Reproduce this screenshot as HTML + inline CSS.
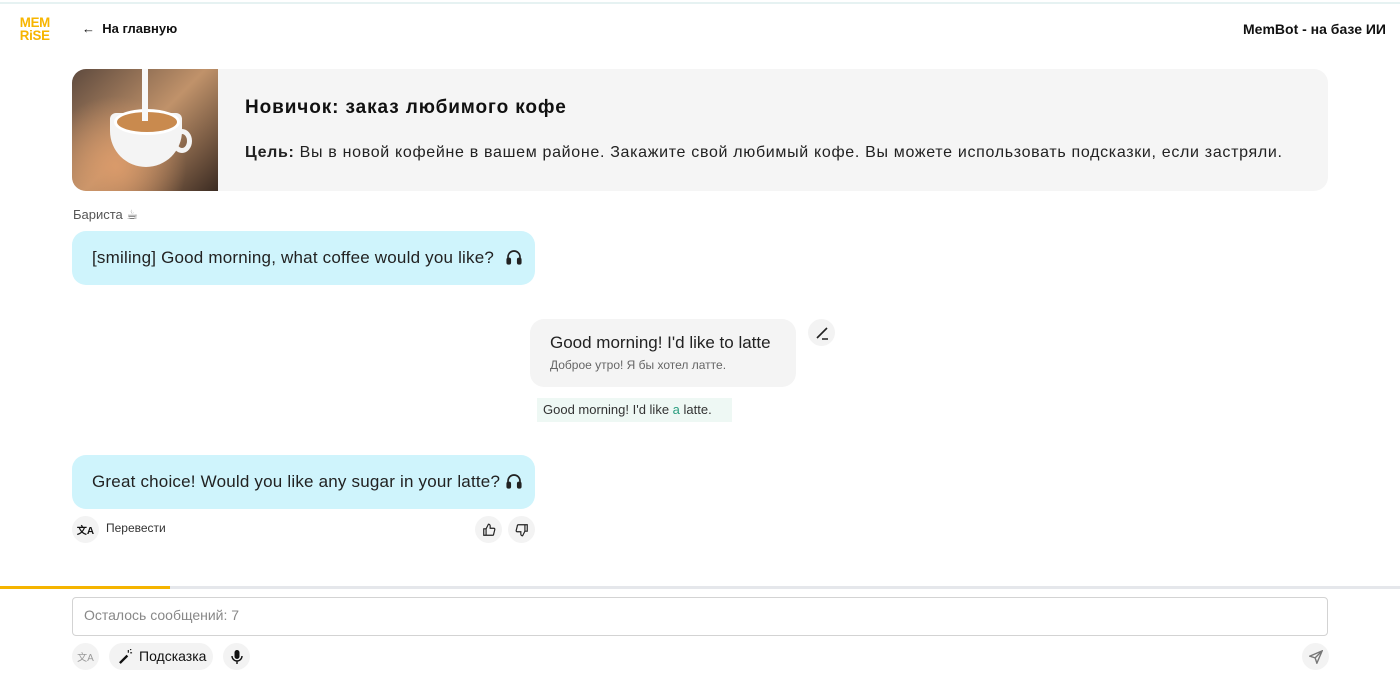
<!DOCTYPE html>
<html><head><meta charset="utf-8"><style>
*{box-sizing:border-box;margin:0;padding:0}
body{width:1400px;height:680px;background:#fff;font-family:"Liberation Sans","DejaVu Sans",sans-serif;color:#111;position:relative;overflow:hidden}
.abs{position:absolute}
.topline{left:0;top:2px;width:1400px;height:2px;background:#e6f2f2}
.logo{left:19px;top:16px;font-weight:900;color:#f7b500;font-size:14px;line-height:13px;letter-spacing:-0.3px;transform:scaleX(0.95)}
.back{left:82px;top:21px;font-size:13px;font-weight:bold}
.membot{right:14px;top:21px;font-size:14px;font-weight:bold}
.card{left:72px;top:69px;width:1256px;height:122px;background:#f5f5f5;border-radius:14px;overflow:hidden}
.img{left:0;top:0;width:146px;height:122px;background:radial-gradient(circle at 30% 80%,#d99a6a,transparent 50%),linear-gradient(135deg,#5e4a3e,#c0926a 50%,#3b2b22);}
.title{left:245px;top:97px;font-size:19px;font-weight:bold;letter-spacing:0.9px}
.goal{left:245px;top:144px;font-size:16px;color:#222;letter-spacing:0.68px}
.label{left:73px;top:207px;font-size:13px;color:#555}
.bot{background:#cff4fc;border-radius:14px;font-size:17px;color:#222;padding:0 20px;line-height:54px;height:54px;letter-spacing:0.2px}
.user{left:530px;top:319px;width:266px;height:68px;background:#f4f4f4;border-radius:14px}
.circ{border-radius:50%;background:#f3f3f3;display:flex;align-items:center;justify-content:center}
svg{display:block}
</style></head><body>
<div class="abs topline"></div>
<div class="abs logo">MEM<br>RiSE</div>
<div class="abs back">←&nbsp; На главную</div>
<div class="abs membot">MemBot - на базе ИИ</div>
<div class="abs card"><div class="abs img">
<div class="abs" style="left:38px;top:44px;width:72px;height:54px;background:#f4f4f4;border-radius:6px 6px 36px 36px"></div>
<div class="abs" style="left:42px;top:40px;width:66px;height:26px;background:#c98a4e;border-radius:50%;border:3px solid #fff"></div>
<div class="abs" style="left:100px;top:60px;width:20px;height:24px;border:5px solid #f4f4f4;border-radius:50%"></div>
<div class="abs" style="left:70px;top:0;width:6px;height:52px;background:#f8f8f8"></div>
</div></div>
<div class="abs title">Новичок: заказ любимого кофе</div>
<div class="abs goal"><b>Цель:</b> Вы в новой кофейне в вашем районе. Закажите свой любимый кофе. Вы можете использовать подсказки, если застряли.</div>
<div class="abs label">Бариста ☕</div>
<div class="abs bot" style="left:72px;top:231px;width:463px">[smiling] Good morning, what coffee would you like?</div>
<svg class="abs" style="left:505px;top:248px" width="18" height="18" viewBox="0 0 24 24" fill="none" stroke="#222" stroke-width="2.2"><path d="M4 17v-5a8 8 0 0 1 16 0v5"/><rect x="3" y="14" width="4" height="7" rx="1.5" fill="#222"/><rect x="17" y="14" width="4" height="7" rx="1.5" fill="#222"/></svg>
<div class="abs user"><div class="abs" style="left:20px;top:14px;font-size:17px;color:#222">Good morning! I'd like to latte</div><div class="abs" style="left:20px;top:39px;font-size:12px;color:#666">Доброе утро! Я бы хотел латте.</div></div>
<div class="abs circ" style="left:808px;top:319px;width:27px;height:27px"><svg width="14" height="14" viewBox="0 0 14 14" stroke="#222" stroke-width="1.6"><path d="M2 12L12 2M7 13h6"/></svg></div>
<div class="abs" style="left:537px;top:398px;width:195px;height:24px;background:#eef8f4;font-size:13px;color:#333;line-height:24px;padding-left:6px">Good morning! I'd like <span style="color:#2a9d7f">a</span> latte.</div>
<div class="abs bot" style="left:72px;top:455px;width:463px">Great choice! Would you like any sugar in your latte?</div>
<svg class="abs" style="left:505px;top:472px" width="18" height="18" viewBox="0 0 24 24" fill="none" stroke="#222" stroke-width="2.2"><path d="M4 17v-5a8 8 0 0 1 16 0v5"/><rect x="3" y="14" width="4" height="7" rx="1.5" fill="#222"/><rect x="17" y="14" width="4" height="7" rx="1.5" fill="#222"/></svg>
<div class="abs circ" style="left:72px;top:516px;width:27px;height:27px;font-size:10px;font-weight:bold">文A</div>
<div class="abs" style="left:106px;top:521px;font-size:12px;color:#333">Перевести</div>
<div class="abs circ" style="left:475px;top:516px;width:27px;height:27px"><svg width="14" height="14" viewBox="0 0 24 24" fill="none" stroke="#222" stroke-width="2"><path d="M7 10v11H3V10zM7 10l4-8a3 3 0 0 1 3 3v4h6a2 2 0 0 1 2 2l-2 8a2 2 0 0 1-2 2H7"/></svg></div>
<div class="abs circ" style="left:508px;top:516px;width:27px;height:27px"><svg width="14" height="14" viewBox="0 0 24 24" fill="none" stroke="#222" stroke-width="2"><path d="M17 14V3h4v11zM17 14l-4 8a3 3 0 0 1-3-3v-4H4a2 2 0 0 1-2-2l2-8a2 2 0 0 1 2-2h11"/></svg></div>
<div class="abs" style="left:0;top:586px;width:1400px;height:3px;background:#e5e7eb"></div>
<div class="abs" style="left:0;top:586px;width:170px;height:3px;background:#f5b400"></div>
<div class="abs" style="left:72px;top:597px;width:1256px;height:39px;border:1px solid #d3d3d3;border-radius:4px;font-size:14px;color:#888;padding:9px 11px">Осталось сообщений: 7</div>
<div class="abs circ" style="left:72px;top:643px;width:27px;height:27px;font-size:10px;color:#999">文A</div>
<div class="abs" style="left:109px;top:643px;width:104px;height:27px;background:#f3f3f3;border-radius:14px;font-size:14px;line-height:27px;padding-left:30px">Подсказка</div>
<svg class="abs" style="left:118px;top:649px" width="15" height="15" viewBox="0 0 16 16" stroke="#111" stroke-width="2.5"><path d="M2 15L10 7"/><path d="M11 1v3M13 4h2M13 1l1-1" stroke-width="1.2"/></svg>
<div class="abs circ" style="left:223px;top:643px;width:27px;height:27px"><svg width="12" height="14" viewBox="0 0 12 14" fill="#111"><rect x="3.5" y="0" width="5" height="9" rx="2.5"/><path d="M1 6a5 5 0 0 0 10 0M6 11v3" stroke="#111" stroke-width="1.4" fill="none"/></svg></div>
<div class="abs circ" style="left:1302px;top:643px;width:27px;height:27px"><svg width="14" height="14" viewBox="0 0 16 16" fill="none" stroke="#777" stroke-width="1.6"><path d="M15 1L1 7l6 2 2 6zM15 1L7 9"/></svg></div>
</body></html>
